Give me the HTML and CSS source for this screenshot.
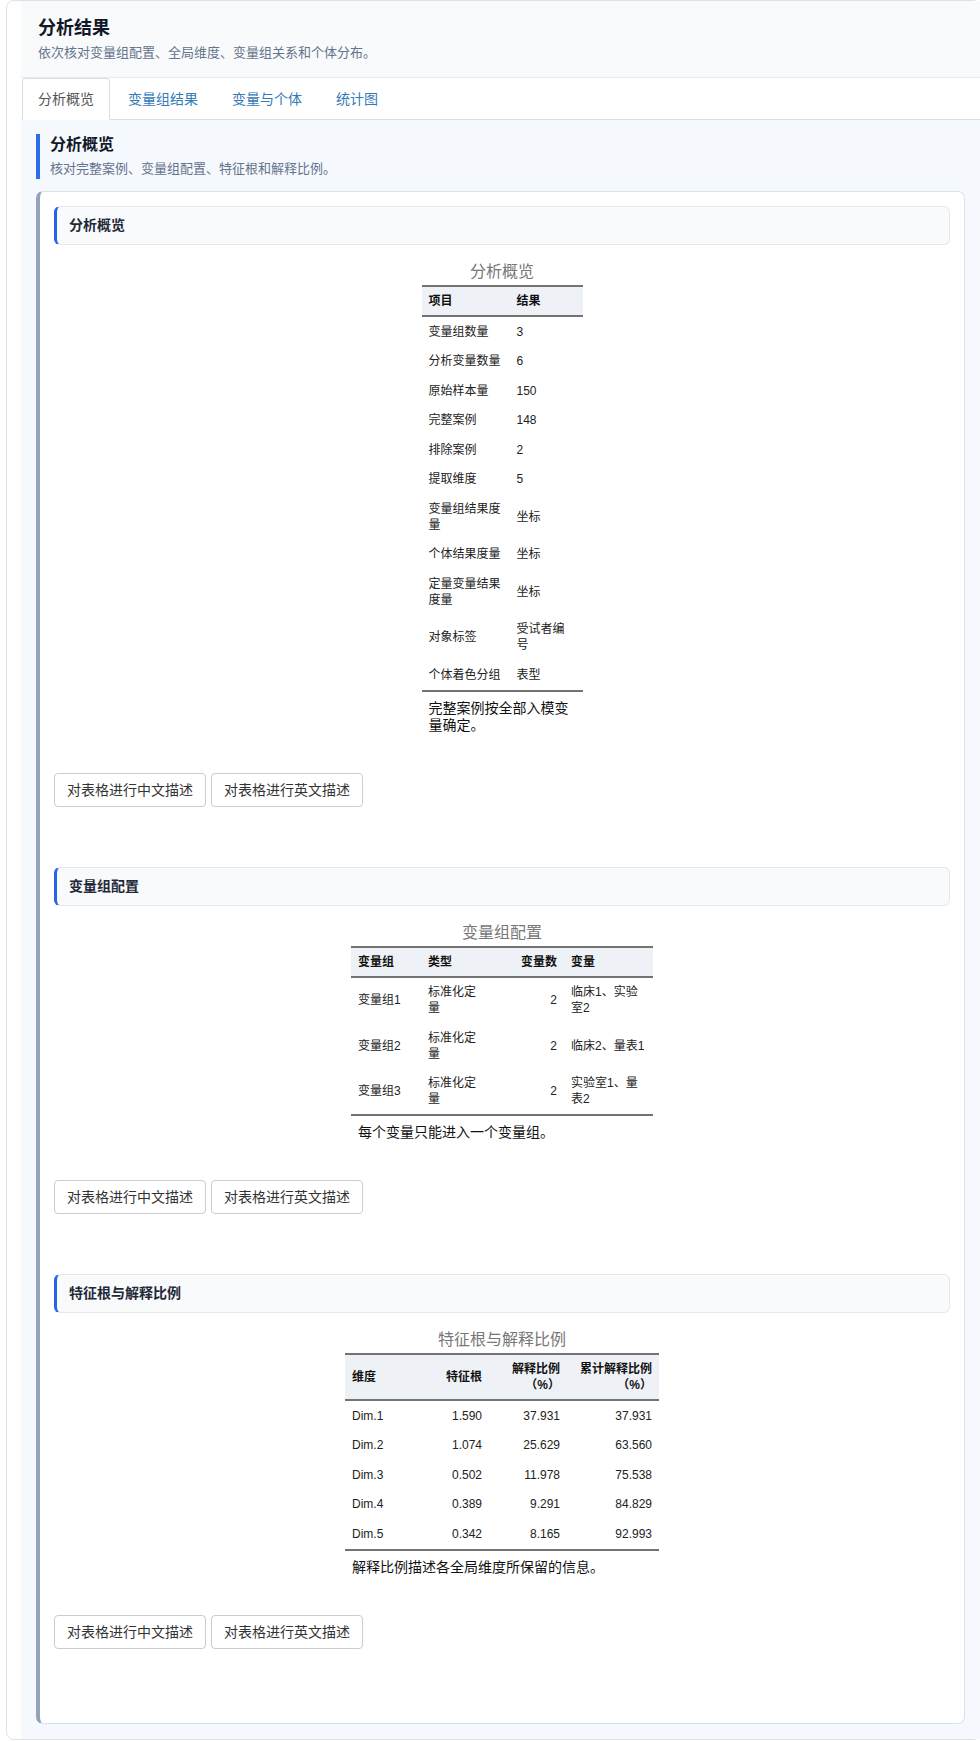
FILE: index.html
```html
<!DOCTYPE html>
<html lang="zh-CN">
<head>
<meta charset="utf-8">
<title>分析结果</title>
<link rel="stylesheet" href="styles.css">
</head>
<body>
<div class="shell">
  <div class="header">
    <h1 class="title">分析结果</h1>
    <p class="subtitle">依次核对变量组配置、全局维度、变量组关系和个体分布。</p>
  </div>
  <ul class="tabs">
    <li><a class="tab active">分析概览</a></li>
    <li><a class="tab">变量组结果</a></li>
    <li><a class="tab">变量与个体</a></li>
    <li><a class="tab">统计图</a></li>
  </ul>
  <div class="panel">
    <div class="sec-head">
      <h2 class="sec-title">分析概览</h2>
      <p class="sec-sub">核对完整案例、变量组配置、特征根和解释比例。</p>
    </div>
    <div class="card">
      <div class="block">
        <div class="bar">分析概览</div>
        <div class="tbl-wrap">
          <table class="gt t1">
            <caption>分析概览</caption>
            <colgroup><col class="w88"><col class="w73"></colgroup>
            <thead><tr><th>项目</th><th>结果</th></tr></thead>
            <tbody>
              <tr><td>变量组数量</td><td>3</td></tr>
              <tr><td>分析变量数量</td><td>6</td></tr>
              <tr><td>原始样本量</td><td>150</td></tr>
              <tr><td>完整案例</td><td>148</td></tr>
              <tr><td>排除案例</td><td>2</td></tr>
              <tr><td>提取维度</td><td>5</td></tr>
              <tr><td>变量组结果度量</td><td>坐标</td></tr>
              <tr><td>个体结果度量</td><td>坐标</td></tr>
              <tr><td>定量变量结果度量</td><td>坐标</td></tr>
              <tr><td>对象标签</td><td>受试者编号</td></tr>
              <tr><td>个体着色分组</td><td>表型</td></tr>
            </tbody>
            <tfoot><tr><td colspan="2">完整案例按全部入模变量确定。</td></tr></tfoot>
          </table>
        </div>
        <div class="actions">
          <button class="btn" type="button">对表格进行中文描述</button>
          <button class="btn" type="button">对表格进行英文描述</button>
        </div>
      </div>

      <div class="block">
        <div class="bar">变量组配置</div>
        <div class="tbl-wrap">
          <table class="gt t2">
            <caption>变量组配置</caption>
            <colgroup><col class="w70"><col class="w72"><col class="w71"><col class="w89"></colgroup>
            <thead><tr><th>变量组</th><th>类型</th><th class="num">变量数</th><th>变量</th></tr></thead>
            <tbody>
              <tr><td>变量组1</td><td>标准化定量</td><td class="num">2</td><td>临床1、实验室2</td></tr>
              <tr><td>变量组2</td><td>标准化定量</td><td class="num">2</td><td>临床2、量表1</td></tr>
              <tr><td>变量组3</td><td>标准化定量</td><td class="num">2</td><td>实验室1、量表2</td></tr>
            </tbody>
            <tfoot><tr><td colspan="4">每个变量只能进入一个变量组。</td></tr></tfoot>
          </table>
        </div>
        <div class="actions">
          <button class="btn" type="button">对表格进行中文描述</button>
          <button class="btn" type="button">对表格进行英文描述</button>
        </div>
      </div>

      <div class="block">
        <div class="bar">特征根与解释比例</div>
        <div class="tbl-wrap">
          <table class="gt t3">
            <caption>特征根与解释比例</caption>
            <colgroup><col class="w72"><col class="w72"><col class="w78"><col class="w92"></colgroup>
            <thead><tr><th>维度</th><th class="num">特征根</th><th class="num">解释比例（%）</th><th class="num">累计解释比例（%）</th></tr></thead>
            <tbody>
              <tr><td>Dim.1</td><td class="num">1.590</td><td class="num">37.931</td><td class="num">37.931</td></tr>
              <tr><td>Dim.2</td><td class="num">1.074</td><td class="num">25.629</td><td class="num">63.560</td></tr>
              <tr><td>Dim.3</td><td class="num">0.502</td><td class="num">11.978</td><td class="num">75.538</td></tr>
              <tr><td>Dim.4</td><td class="num">0.389</td><td class="num">9.291</td><td class="num">84.829</td></tr>
              <tr><td>Dim.5</td><td class="num">0.342</td><td class="num">8.165</td><td class="num">92.993</td></tr>
            </tbody>
            <tfoot><tr><td colspan="4">解释比例描述各全局维度所保留的信息。</td></tr></tfoot>
          </table>
        </div>
        <div class="actions">
          <button class="btn" type="button">对表格进行中文描述</button>
          <button class="btn" type="button">对表格进行英文描述</button>
        </div>
      </div>
    </div>
  </div>
</div>
</body>
</html>
```
FILE: styles.css
```css
html, body {
  margin: 0;
  padding: 0;
  background: #ffffff;
  overflow: hidden;
}
body {
  font-family: "Liberation Sans", "Noto Sans CJK SC", sans-serif;
  color: #1f2937;
}
.shell {
  margin-left: 6px;
  width: 975px;
  box-sizing: border-box;
  border: 1px solid #dbe2ea;
  border-radius: 8px;
  padding-left: 14px;
  background: #ffffff;
}
.header {
  background: #f8fafc;
  padding: 15px 17px 14px;
  border-bottom: 1px solid #e5e9f0;
}
.title {
  margin: 0;
  font-size: 18px;
  line-height: 24px;
  font-weight: 700;
  color: #111827;
}
.subtitle {
  margin: 3px 0 0;
  font-size: 13px;
  line-height: 20px;
  color: #64748b;
}
.tabs {
  display: flex;
  list-style: none;
  margin: 0;
  padding: 0 0 0 1px;
  border-bottom: 1px solid #dddddd;
  background: #ffffff;
}
.tab {
  display: block;
  padding: 10px 15px;
  margin-right: 2px;
  margin-bottom: -1px;
  font-size: 14px;
  line-height: 20px;
  color: #337ab7;
  border: 1px solid transparent;
  border-radius: 4px 4px 0 0;
}
.tab.active {
  color: #555555;
  background: #ffffff;
  border-color: #dddddd #dddddd transparent;
}
.panel {
  background: #f5f8fc;
  padding: 14px 15px 15px;
}
.sec-head {
  border-left: 4px solid #2f6bed;
  padding-left: 10px;
  margin-bottom: 12px;
}
.sec-title {
  margin: 0;
  font-size: 16px;
  line-height: 22px;
  font-weight: 700;
  color: #111827;
}
.sec-sub {
  margin: 3px 0 0;
  font-size: 13px;
  line-height: 20px;
  color: #64748b;
}
.card {
  background: #ffffff;
  border: 1px solid #d8e1ec;
  border-left: 4px solid #94a3b8;
  border-radius: 7px;
  padding: 14px;
}
.block {
  margin-bottom: 60px;
}
.bar {
  height: 37px;
  line-height: 37px;
  background: #f8fafc;
  border: 1px solid #e2e8f0;
  border-left: 3px solid #2563eb;
  border-radius: 6px;
  padding: 0 12px;
  font-size: 14px;
  font-weight: 700;
  color: #1f2937;
}
.tbl-wrap {
  margin-top: 17px;
}
.gt {
  margin: 0 auto;
  border-collapse: collapse;
  table-layout: fixed;
  font-size: 12px;
  line-height: 16px;
  color: #222222;
}
.t1 { width: 161px; }
.t2 { width: 302px; }
.t3 { width: 314px; }
.w70 { width: 70px; }
.w71 { width: 71px; }
.w72 { width: 72px; }
.w73 { width: 73px; }
.w78 { width: 78px; }
.w88 { width: 88px; }
.w89 { width: 89px; }
.w92 { width: 92px; }
.gt caption {
  font-size: 16px;
  line-height: 20px;
  color: #777777;
  padding-bottom: 3px;
  text-align: center;
}
.gt th {
  background: #eef2f6;
  border-top: 2px solid #737373;
  border-bottom: 2px solid #737373;
  padding: 6px 7px;
  font-weight: 700;
  text-align: left;
  vertical-align: middle;
  color: #111111;
}
.gt td {
  padding: 6.75px 7px;
  vertical-align: middle;
}
.gt tbody tr:last-child td {
  border-bottom: 2px solid #737373;
}
.gt tfoot td {
  padding: 8px 7px;
  font-size: 14px;
  line-height: 17px;
  color: #111111;
}
.gt .num {
  text-align: right;
}
.actions {
  display: flex;
  gap: 5px;
  margin-top: 31px;
}
.btn {
  font-family: "Liberation Sans", "Noto Sans CJK SC", sans-serif;
  font-size: 14px;
  line-height: 20px;
  padding: 6px 12px;
  border: 1px solid #cccccc;
  border-radius: 4px;
  background: #ffffff;
  color: #333333;
}
```
